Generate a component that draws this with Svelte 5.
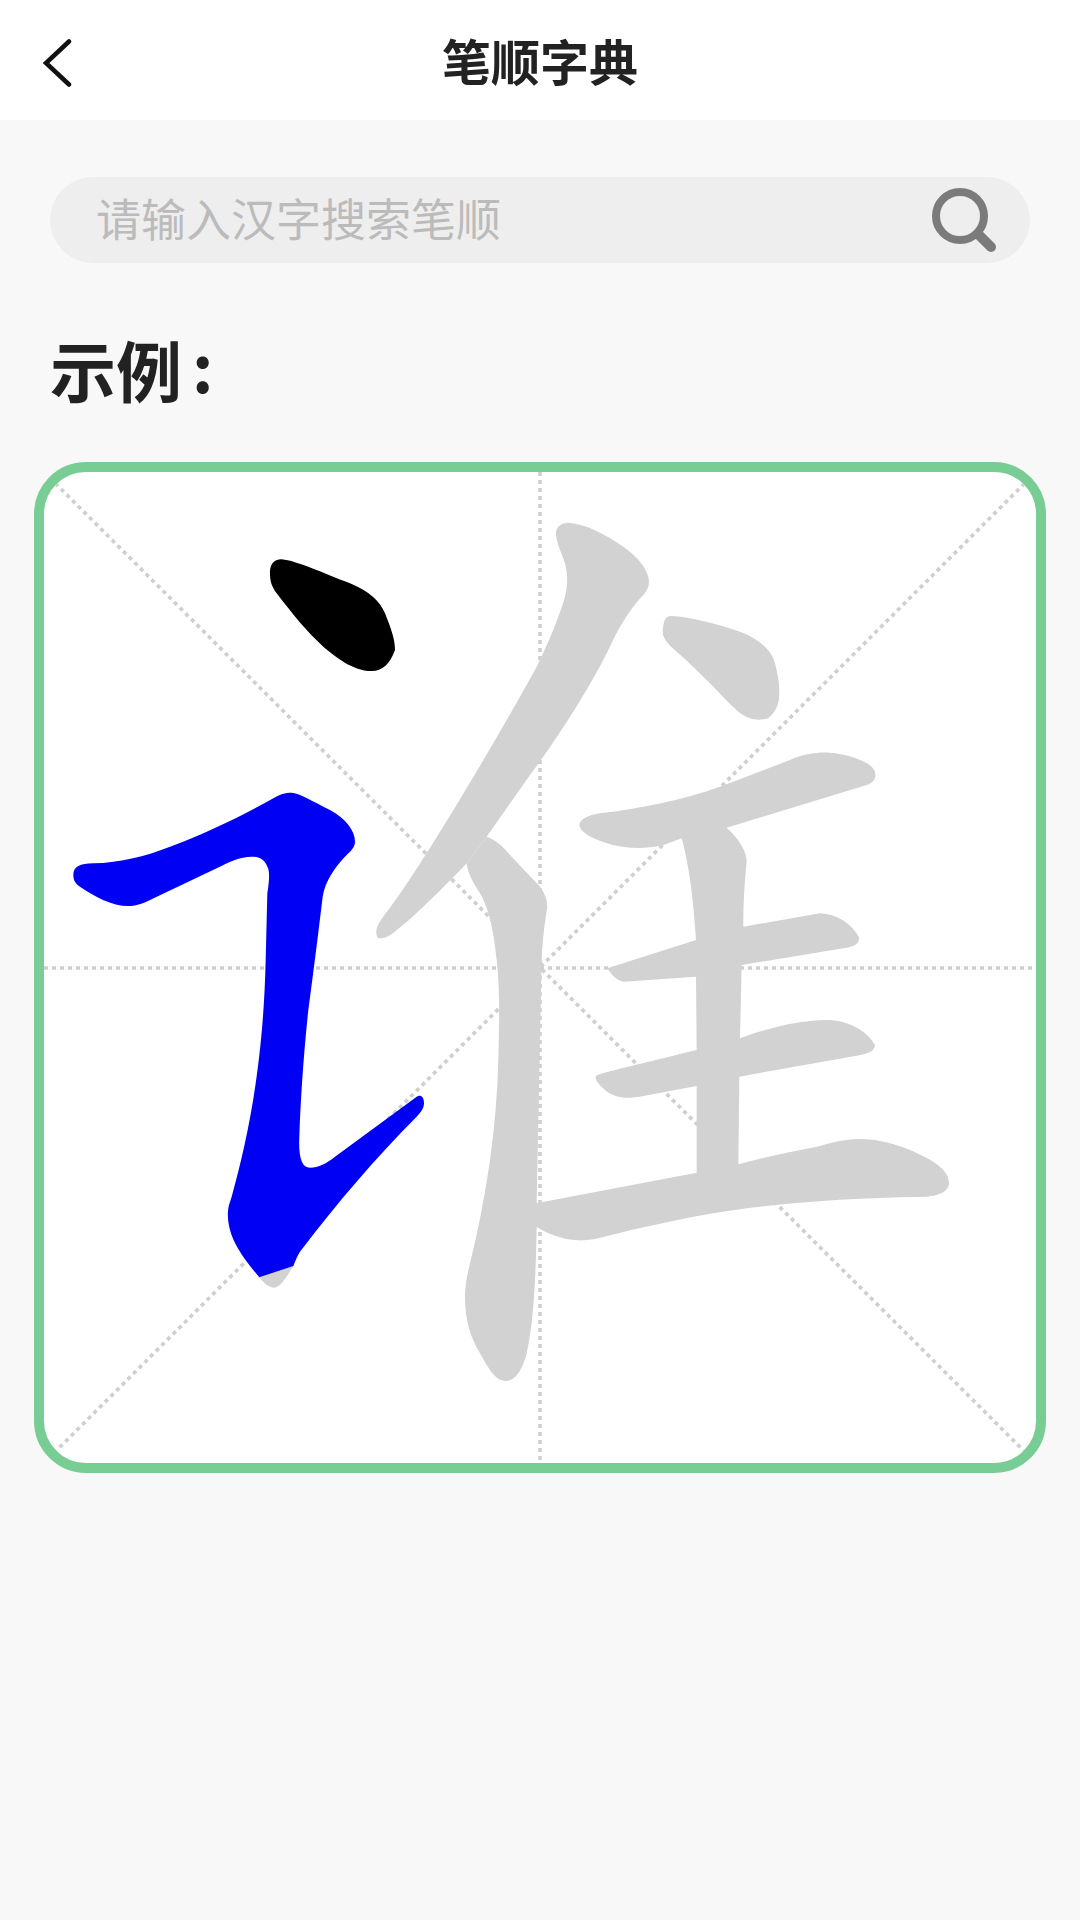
<script>
  let title = "笔顺字典";
  let placeholder = "请输入汉字搜索笔顺";

  // glyph outlines are in 1/3px units, origin at (30,450) of the page
  const guides = [
    "M42 1554H3018",
    "M1530 66V3039",
    "M42 66L3018 3039",
    "M3018 66L42 3039",
  ];

  const grayStrokes = [
    // pie
    "M1578 255C1575 230 1595 218 1615 218C1670 222 1730 255 1780 290C1830 325 1857 365 1857 395C1857 415 1845 430 1835 440C1790 490 1760 545 1735 600C1680 710 1600 840 1500 975L1370 1160L1310 1240C1220 1335 1130 1420 1100 1440C1080 1458 1065 1466 1045 1465C1030 1445 1045 1420 1060 1400C1150 1290 1400 870 1520 650C1570 550 1600 460 1605 440C1615 395 1612 370 1605 340C1595 310 1580 280 1578 255Z",
    // shu
    "M1370 1160C1395 1168 1420 1190 1440 1215L1530 1310C1545 1330 1552 1350 1552 1370C1542 1430 1537 1480 1535 1530L1520 2255L1520 2330C1517 2500 1510 2620 1490 2710C1478 2760 1455 2793 1428 2793C1395 2793 1375 2755 1350 2710C1320 2660 1305 2610 1305 2540C1305 2510 1310 2480 1320 2440C1370 2240 1400 2030 1405 1830C1408 1700 1410 1620 1400 1530C1390 1430 1375 1375 1350 1330C1330 1300 1313 1270 1310 1240Z",
    // dian
    "M1898 545C1900 515 1905 498 1925 498C1980 500 2060 522 2130 545C2185 565 2225 600 2235 640C2245 680 2250 710 2247 745C2245 770 2232 790 2215 805C2180 815 2150 805 2125 785C2100 765 2070 730 2040 700C2005 665 1975 635 1940 605C1915 583 1898 565 1898 545Z",
    // the horizontals and the upright
    "M1648 1125C1650 1105 1680 1095 1710 1090C1830 1075 1960 1050 2070 1010L2280 930C2320 912 2360 906 2400 908C2450 912 2500 928 2525 950C2545 970 2540 1000 2500 1008L2090 1133C2130 1170 2150 1205 2150 1235C2142 1310 2140 1380 2140 1430L2370 1390C2420 1392 2465 1420 2487 1462C2490 1482 2470 1492 2440 1495L2135 1545L2130 1765C2210 1735 2300 1712 2390 1710C2450 1710 2510 1740 2535 1785C2535 1805 2510 1813 2480 1817L2128 1880L2125 2143C2200 2122 2280 2105 2360 2090C2400 2080 2440 2067 2490 2067C2570 2067 2650 2100 2710 2135C2740 2155 2757 2175 2757 2200C2755 2228 2720 2241 2670 2241C2500 2243 2300 2255 2150 2275C2000 2295 1840 2330 1705 2365C1660 2375 1620 2372 1590 2362C1560 2352 1540 2343 1518 2330L1518 2260L2000 2168L2000 1908L1840 1938C1790 1948 1755 1945 1725 1920C1705 1902 1695 1890 1697 1880C1700 1872 1715 1870 2000 1800L1998 1580L1780 1595C1760 1592 1745 1575 1732 1555L1998 1470C1990 1340 1975 1235 1955 1165L1900 1185C1850 1197 1800 1197 1750 1185C1700 1172 1650 1150 1648 1125Z",
    // tip of the yu stroke still showing under the blue
    "M688 2482C705 2505 720 2513 732 2513C750 2513 768 2485 790 2448Z",
  ];

  const doneStroke =
    "M720 375C718 345 730 328 755 328C800 332 880 370 960 400C1020 425 1050 455 1065 490C1085 540 1095 570 1095 600C1080 640 1060 663 1025 663C965 663 910 615 880 590C830 545 790 495 740 430C725 410 721 395 720 375Z";

  const activeStroke =
    "M130 1275C130 1250 150 1240 190 1240C270 1238 350 1218 420 1190C530 1150 640 1095 730 1045C750 1033 765 1028 785 1028C805 1028 850 1055 900 1080C945 1105 975 1140 975 1175C975 1190 965 1200 955 1210C915 1250 885 1295 878 1340C865 1450 851 1560 835 1680C820 1820 812 1950 808 2060C805 2120 815 2153 840 2153C865 2153 890 2140 915 2120L1160 1940C1172 1933 1182 1940 1182 1960C1182 1975 1172 1988 1160 2000C1040 2120 920 2260 810 2405C802 2418 796 2432 790 2448L688 2482C640 2425 610 2380 600 2340C592 2310 592 2285 597 2265L605 2240C650 2080 700 1850 707 1530L712 1330C720 1280 718 1260 712 1250C705 1230 690 1220 665 1220C630 1220 595 1237 560 1255L360 1350C335 1363 315 1368 295 1368C245 1368 195 1340 150 1310C135 1300 130 1290 130 1275Z";
</script>

<div class="page">
  <header class="topbar">
    <button type="button" class="back" aria-label="返回">
      <svg width="32" height="48" viewBox="0 0 32 48">
        <path d="M28 2.5L5 24L28 45.5" />
      </svg>
    </button>
    <h1 class="title">{title}</h1>
    <span></span>
  </header>

  <div class="search">
    <span class="placeholder">{placeholder}</span>
    <svg class="search-icon" width="64" height="64" viewBox="0 0 64 64">
      <circle cx="28" cy="28" r="24" />
      <path d="M46 46L59 59" />
    </svg>
  </div>

  <h2 class="label">示例<span class="colon">:</span></h2>

  <div class="board">
    <svg class="writer" viewBox="42 66 2976 2973">
      {#each guides as d}
        <path class="guide" {d} />
      {/each}
      {#each grayStrokes as d}
        <path fill="#d2d2d2" {d} />
      {/each}
      <path fill="#000000" d={doneStroke} />
      <path fill="#0000f5" d={activeStroke} />
    </svg>
  </div>
</div>

<style>
  :global(body) {
    margin: 0;
    background: #f8f8f8;
  }
  .page {
    min-height: 1920px;
    background: #f8f8f8;
    font-family: "Noto Sans CJK SC", "Noto Sans", sans-serif;
    display: flow-root;
  }
  .topbar {
    height: 120px;
    background: #fff;
    display: grid;
    grid-template-columns: 1fr auto 1fr;
    align-items: center;
  }
  .back {
    justify-self: start;
    margin: 5px 0 0 41px;
    padding: 0;
    border: 0;
    background: none;
    display: flex;
  }
  .back path {
    fill: none;
    stroke: #111;
    stroke-width: 4.5;
    stroke-linecap: round;
    stroke-linejoin: miter;
  }
  .title {
    margin: 0;
    font-size: 49px;
    line-height: 60px;
    font-weight: 700;
    color: #222;
  }
  .search {
    margin: 57px 50px 0;
    height: 86px;
    border-radius: 43px;
    background: #eeeeee;
    display: flex;
    align-items: center;
    justify-content: space-between;
    padding: 0 34px 0 46px;
  }
  .placeholder {
    font-size: 45px;
    margin-bottom: 5px;
    color: #bbb;
  }
  .search-icon circle,
  .search-icon path {
    fill: none;
    stroke: #7b7b7b;
  }
  .search-icon circle {
    stroke-width: 8;
  }
  .search-icon path {
    stroke-width: 10;
    stroke-linecap: round;
  }
  .label {
    margin: 56px 0 0 50px;
    font-size: 66px;
    line-height: 90px;
    font-weight: 700;
    color: #222;
  }
  .colon {
    margin-left: 10px;
    vertical-align: 4px;
  }
  .board {
    margin: 49px 34px 0;
    height: 991px;
    border: 10px solid #78cd95;
    border-radius: 52px;
    background: #fff;
    overflow: hidden;
  }
  .writer {
    display: block;
    width: 100%;
    height: 100%;
  }
  .guide {
    fill: none;
    stroke: #cfcfcf;
    stroke-width: 11;
    stroke-dasharray: 12 12;
  }
</style>
